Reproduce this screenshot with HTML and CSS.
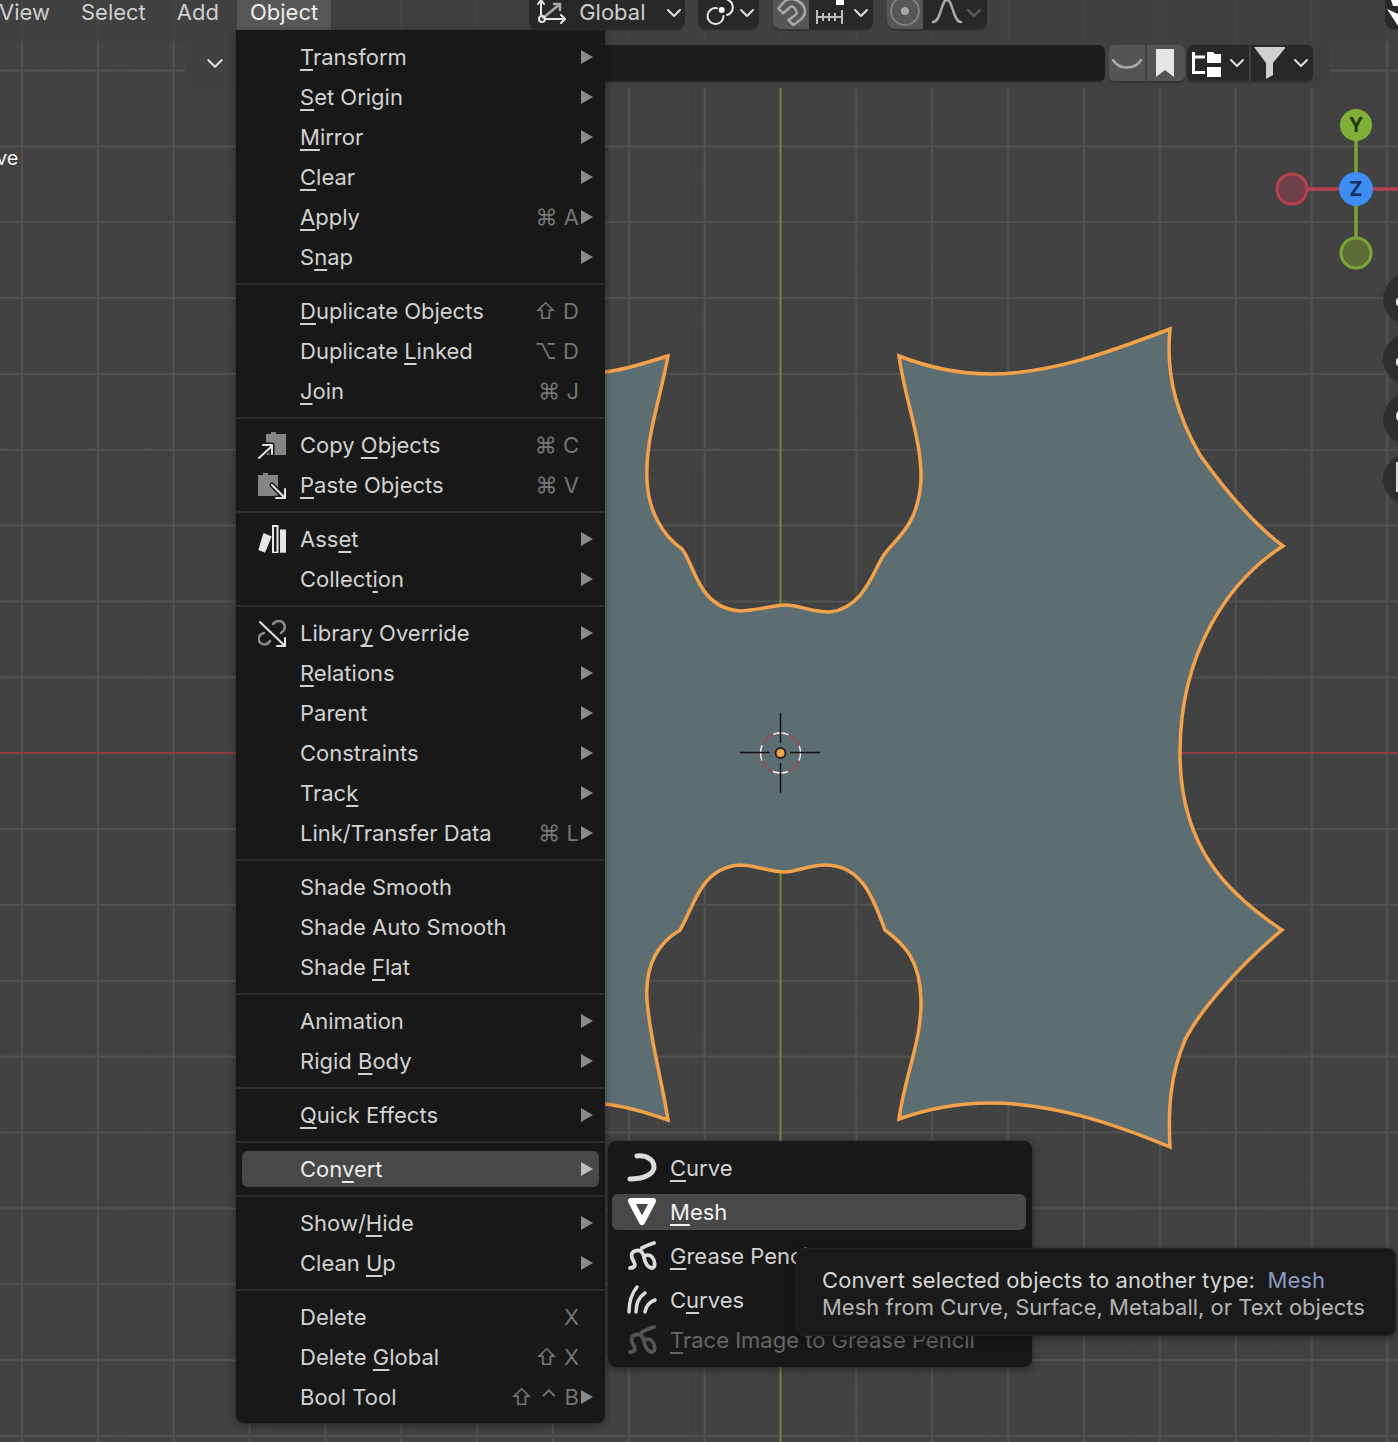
FILE: index.html
```html
<!DOCTYPE html>
<html lang="en">
<head>
<meta charset="utf-8">
<title>Object menu</title>
<link rel="stylesheet" href="styles.css">
</head>
<body>
<svg class="defs" width="0" height="0" aria-hidden="true">
  <defs>
    <symbol id="chev" viewBox="0 0 16 10"><path d="M2 2l6 6 6-6" fill="none" stroke="currentColor" stroke-width="2" stroke-linecap="round" stroke-linejoin="round"/></symbol>
    <symbol id="gp" viewBox="0 0 30 30"><path d="M3 27C7 27 9 25 7 21C4 16 3 12 8 10C13 8 16 11 17 16C18 22 21 27 25 27C29 27 28 19 25 16C22 13 18 14 17 16M15 7C19 5 23 3 27 2" fill="none" stroke="currentColor" stroke-width="3.8" stroke-linecap="round"/></symbol>
  </defs>
</svg>
<div class="stage">
  <svg class="canvas" viewBox="0 0 1398 1442" width="1398" height="1442" aria-hidden="true">
    <line x1="780.5" y1="0" x2="780.5" y2="1442" class="axis-y"/>
    <line x1="0" y1="753" x2="1398" y2="753" class="axis-x"/>
    <path class="mesh" d="M560 378L605 372C625 370 645 363 668 356C660 400 645 440 647 480C648 510 662 535 682 549C695 565 698 608 740 611C760 610 775 605 785 605C800 605 810 612 830 612C862 608 872 575 882 558C892 540 918 530 921 480C922 440 905 400 899 356C930 368 960 374 990 374C1050 374 1110 352 1170 329C1165 380 1180 420 1200 455C1225 490 1255 525 1283 546C1230 580 1180 650 1180 753C1180 850 1230 895 1282 930C1240 965 1200 1010 1185 1040C1170 1075 1168 1110 1170 1147C1110 1122 1050 1103 990 1103C960 1103 930 1108 899 1119C905 1075 922 1040 921 1000C920 960 905 945 885 930C875 905 865 865 825 865C810 865 795 872 785 872C770 872 755 865 740 865C700 868 695 905 680 930C655 945 645 970 647 1000C650 1040 662 1080 668 1120C645 1112 625 1106 605 1104L560 1100Z"/>
    <g class="cursor3d">
      <circle cx="780.5" cy="753" r="20" class="c-red"/>
      <circle cx="780.5" cy="753" r="20" class="c-white"/>
      <path d="M780.5 713v30M780.5 763v30M740 752.5h30M790 752.5h30"/>
    </g>
    <circle cx="780.5" cy="753" r="5" class="origin"/>
    <g class="gizmo">
      <line x1="1292" y1="189" x2="1398" y2="189" class="g-red"/>
      <line x1="1356" y1="125" x2="1356" y2="253" class="g-green"/>
      <circle cx="1292" cy="189" r="15" class="g-xn"/>
      <circle cx="1356" cy="253" r="15" class="g-yn"/>
      <circle cx="1356" cy="125" r="16" class="g-y"/>
      <circle cx="1356" cy="189" r="17" class="g-z"/>
      <text x="1356" y="132" class="g-ty">Y</text>
      <text x="1356" y="196" class="g-tz">Z</text>
    </g>
  </svg>

  <div class="tool-circles">
    <div class="tool-circle"><span class="tc-mark"></span></div>
    <div class="tool-circle"><span class="tc-mark"></span></div>
    <div class="tool-circle"><span class="tc-mark tc-round"></span></div>
    <div class="tool-circle"><span class="tc-mark tc-grid"></span></div>
  </div>

  <div class="side-label">ve</div>

  <header class="header">
    <div class="mitem mitem-first">View</div>
    <div class="mitem">Select</div>
    <div class="mitem">Add</div>
    <div class="mitem mitem-on">Object</div>

    <div class="hgroup hg-global">
      <svg class="hi-orient" viewBox="0 0 30 26" width="30" height="26"><path d="M6 18L23 4M23 4h-6M23 4v6" class="st-gray"/><path d="M4 15V1M1 4l3-4 3 4M8 19h20M24 15l4 4-4 4" class="st-white"/><circle cx="5" cy="19" r="3" class="st-white"/></svg>
      <span class="hg-label">Global</span>
      <svg class="chev" width="16" height="10"><use href="#chev"/></svg>
    </div>

    <div class="hgroup hg-pivot">
      <svg viewBox="0 0 30 26" width="30" height="26"><path d="M11 8.200A8 8 0 1 0 17.500 16" class="st-white"/><path d="M22 0A8 8 0 0 1 21 15" class="st-white"/><circle cx="15.700" cy="10" r="3" class="fl-white"/></svg>
      <svg class="chev" width="16" height="10"><use href="#chev"/></svg>
    </div>

    <div class="hgroup hg-snap">
      <div class="hbtn hbtn-on">
        <svg viewBox="0 0 30 26" width="30" height="26"><path d="M2.300 8.300L9 1C16 -4 29 2 29 12C29 16 26 19 17.300 25L12.300 20C18 16 21 15 20.700 12.700C20 8 16 5 14 7.300L7.300 13.300Z" class="st-gray"/></svg>
      </div>
      <svg class="hi-inc" viewBox="0 0 30 26" width="30" height="26"><path d="M1 10v14M26 10v14M1 17h25M7 13v8M13 13v8M19 13v8" class="st-thin"/><rect x="20" y="0" width="8" height="5" class="fl-white"/></svg>
      <svg class="chev" width="16" height="10"><use href="#chev"/></svg>
    </div>

    <div class="hgroup hg-prop">
      <div class="hbtn hbtn-on">
        <svg viewBox="0 0 36 26" width="36" height="26"><circle cx="18" cy="11" r="14" class="st-dim"/><circle cx="18" cy="11" r="4" class="fl-gray"/></svg>
      </div>
      <svg class="hi-bell" viewBox="0 0 32 26" width="32" height="26"><path d="M2 22C10 22 10 0 16 0C22 0 22 22 30 22" class="st-gray"/></svg>
      <svg class="chev chev-dim" width="16" height="10"><use href="#chev"/></svg>
    </div>

    <div class="corner-btn">
      <svg viewBox="0 0 13 28" width="13" height="28"><path d="M2 9L13 14V26Z" class="fl-white"/><path d="M6 0h7v6H8Z" class="fl-white"/></svg>
    </div>
  </header>

  <div class="toolbar">
    <svg class="chev chev-panel" width="18" height="11"><use href="#chev"/></svg>
    <div class="search"></div>
    <div class="tgroup tg-first">
      <div class="tbtn tbtn-on tbtn-smile"><svg viewBox="0 0 36 36" width="36" height="36"><path d="M4 15C10 25 26 25 32 15" class="st-gray"/></svg></div>
      <div class="tbtn tbtn-on tbtn-mark"><svg viewBox="0 0 38 36" width="38" height="36"><path d="M9 4H27V32L18 25L9 32Z" class="fl-light"/></svg></div>
    </div>
    <div class="tgroup tg-dark">
      <div class="tbtn tbtn-tree">
        <svg viewBox="0 0 32 36" width="32" height="36"><path d="M6.500 7V27.500H18M6.500 12H18" class="st-tree"/><path d="M20 10V7H26L28 9H34V18H20Z" class="fl-white"/><path d="M20 22H34V32H20Z" class="fl-white"/></svg>
        <svg class="chev" width="16" height="10"><use href="#chev"/></svg>
      </div>
      <div class="tbtn tbtn-filter">
        <svg viewBox="0 0 34 36" width="34" height="36"><path d="M3 2H35L22 18V30L15 34V18Z" class="fl-silver"/></svg>
        <svg class="chev" width="16" height="10"><use href="#chev"/></svg>
      </div>
    </div>
  </div>

  <nav class="menu">
    <div class="group">
      <div class="row"><span class="ic"></span><span class="lb"><u>T</u>ransform</span><span class="arr"></span></div>
      <div class="row"><span class="ic"></span><span class="lb"><u>S</u>et Origin</span><span class="arr"></span></div>
      <div class="row"><span class="ic"></span><span class="lb"><u>M</u>irror</span><span class="arr"></span></div>
      <div class="row"><span class="ic"></span><span class="lb"><u>C</u>lear</span><span class="arr"></span></div>
      <div class="row"><span class="ic"></span><span class="lb"><u>A</u>pply</span><span class="key">⌘ A</span><span class="arr"></span></div>
      <div class="row"><span class="ic"></span><span class="lb">S<u>n</u>ap</span><span class="arr"></span></div>
    </div>
    <div class="group">
      <div class="row"><span class="ic"></span><span class="lb"><u>D</u>uplicate Objects</span><span class="key">⇧ D</span><span class="noarr"></span></div>
      <div class="row"><span class="ic"></span><span class="lb">Duplicate <u>L</u>inked</span><span class="key">⌥ D</span><span class="noarr"></span></div>
      <div class="row"><span class="ic"></span><span class="lb"><u>J</u>oin</span><span class="key">⌘ J</span><span class="noarr"></span></div>
    </div>
    <div class="group">
      <div class="row"><span class="ic"><svg viewBox="0 0 28 28" width="28" height="28"><path d="M8 3H13V1H18V3H28V24H8Z" class="fl-mid"/><path d="M1 27L14 15M5 14H14V23" class="st-halo"/><path d="M1 27L14 15M5 14H14V23" class="st-icon"/></svg></span><span class="lb">Copy <u>O</u>bjects</span><span class="key">⌘ C</span><span class="noarr"></span></div>
      <div class="row"><span class="ic"><svg viewBox="0 0 28 28" width="28" height="28"><path d="M0 4H5V2H10V4H20V25H0Z" class="fl-mid"/><path d="M14 14L27 27M27 18V27H18" class="st-halo"/><path d="M14 14L27 27M27 18V27H18" class="st-icon"/></svg></span><span class="lb"><u>P</u>aste Objects</span><span class="key">⌘ V</span><span class="noarr"></span></div>
    </div>
    <div class="group">
      <div class="row"><span class="ic"><svg viewBox="0 0 28 28" width="28" height="28"><path d="M5.500 8L13.700 11.500L7 27.700L0.300 25Z" class="fl-light"/><rect x="15" y="1" width="4.500" height="26.700" class="st-thin2"/><rect x="22" y="4.500" width="6" height="23.200" class="fl-light"/></svg></span><span class="lb">Ass<u>e</u>t</span><span class="arr"></span></div>
      <div class="row"><span class="ic"></span><span class="lb">Collect<u>i</u>on</span><span class="arr"></span></div>
    </div>
    <div class="group">
      <div class="row"><span class="ic"><svg viewBox="0 0 28 28" width="28" height="28"><path d="M15 5C18 1 24 1 26 5C28 9 26 12 23 14M12 22C9 27 3 26 1 22C0 18 2 15 6 14" class="st-chain"/><path d="M2 3L27 27M27 19V27H19" class="st-icon"/></svg></span><span class="lb">Librar<u>y</u> Override</span><span class="arr"></span></div>
      <div class="row"><span class="ic"></span><span class="lb"><u>R</u>elations</span><span class="arr"></span></div>
      <div class="row"><span class="ic"></span><span class="lb">Parent</span><span class="arr"></span></div>
      <div class="row"><span class="ic"></span><span class="lb">Constraints</span><span class="arr"></span></div>
      <div class="row"><span class="ic"></span><span class="lb">Trac<u>k</u></span><span class="arr"></span></div>
      <div class="row"><span class="ic"></span><span class="lb">Link/Transfer Data</span><span class="key">⌘ L</span><span class="arr"></span></div>
    </div>
    <div class="group">
      <div class="row"><span class="ic"></span><span class="lb">Shade Smooth</span></div>
      <div class="row"><span class="ic"></span><span class="lb">Shade Auto Smooth</span></div>
      <div class="row"><span class="ic"></span><span class="lb">Shade <u>F</u>lat</span></div>
    </div>
    <div class="group">
      <div class="row"><span class="ic"></span><span class="lb">Animation</span><span class="arr"></span></div>
      <div class="row"><span class="ic"></span><span class="lb">Rigid <u>B</u>ody</span><span class="arr"></span></div>
    </div>
    <div class="group">
      <div class="row"><span class="ic"></span><span class="lb"><u>Q</u>uick Effects</span><span class="arr"></span></div>
    </div>
    <div class="group">
      <div class="row row-on"><span class="ic"></span><span class="lb">Con<u>v</u>ert</span><span class="arr"></span></div>
    </div>
    <div class="group">
      <div class="row"><span class="ic"></span><span class="lb">Show/<u>H</u>ide</span><span class="arr"></span></div>
      <div class="row"><span class="ic"></span><span class="lb">Clean <u>U</u>p</span><span class="arr"></span></div>
    </div>
    <div class="group">
      <div class="row"><span class="ic"></span><span class="lb">Delete</span><span class="key">X</span><span class="noarr"></span></div>
      <div class="row"><span class="ic"></span><span class="lb">Delete <u>G</u>lobal</span><span class="key">⇧ X</span><span class="noarr"></span></div>
      <div class="row"><span class="ic"></span><span class="lb">Bool Tool</span><span class="key key-wide">⇧ ⌃ B</span><span class="arr"></span></div>
    </div>
  </nav>

  <div class="submenu">
    <div class="srow"><svg class="sic" viewBox="0 0 30 30" width="30" height="30"><path d="M10 3C20 2 27 7 27 14C27 22 15 26 3 26" class="st-curve"/></svg><span class="lb"><u>C</u>urve</span></div>
    <div class="srow srow-on"><svg class="sic" viewBox="0 0 30 30" width="30" height="30"><path d="M4 4H26L15 25Z" class="st-mesh"/></svg><span class="lb"><u>M</u>esh</span></div>
    <div class="srow"><svg class="sic" width="30" height="30"><use href="#gp"/></svg><span class="lb"><u>G</u>rease Pencil</span></div>
    <div class="srow"><svg class="sic" viewBox="0 0 30 30" width="30" height="30"><path d="M2 27C2 18 5 8 10 2M9 27C9 19 12 12 18 8M18 27C19 22 22 17 28 15" class="st-hair"/></svg><span class="lb">C<u>u</u>rves</span></div>
    <div class="srow srow-off"><svg class="sic" width="30" height="30"><use href="#gp"/></svg><span class="lb"><u>T</u>race Image to Grease Pencil</span></div>
  </div>

  <div class="tooltip">
    <p class="tip-l1">Convert selected objects to another type:&nbsp; <span class="tip-val">Mesh</span></p>
    <p class="tip-l2">Mesh from Curve, Surface, Metaball, or Text objects</p>
  </div>
</div>
</body>
</html>
```
FILE: styles.css
```css
* { box-sizing: border-box; }
html, body { margin: 0; padding: 0; background: #404040; }
body { font-family: "Inter", "DejaVu Sans", sans-serif; font-size: 22px; color: #d2d2d2; }
.defs { position: absolute; }

.stage {
  position: relative;
  width: 1398px;
  height: 1442px;
  overflow: hidden;
  background-color: #414141;
  background-image:
    linear-gradient(to right, #515151 2px, transparent 2px),
    linear-gradient(to bottom, #515151 2px, transparent 2px),
    linear-gradient(to right, #444444 1px, transparent 1px),
    linear-gradient(to bottom, #444444 1px, transparent 1px);
  background-size: 75.87px 75.87px, 75.87px 75.87px, 7.587px 7.587px, 7.587px 7.587px;
  background-position: 21px 69.5px, 21px 69.5px, 21px 69.5px, 21px 69.5px;
}

/* viewport canvas */
.canvas { position: absolute; left: 0; top: 0; }
.axis-y { stroke: #6d8a2d; stroke-width: 2; }
.axis-x { stroke: #8f3a45; stroke-width: 2; }
.mesh { fill: #5d6e72; stroke: #f2a24a; stroke-width: 3.5; stroke-linejoin: miter; }
.cursor3d path { stroke: #111; stroke-width: 1.500; fill: none; }
.c-red { fill: none; stroke: #9a4a4e; stroke-width: 1.500; }
.c-white { fill: none; stroke: #eee; stroke-width: 1.500; stroke-dasharray: 15.7 15.7; stroke-dashoffset: 8; }
.origin { fill: #f2a545; stroke: #222; stroke-width: 2; }
.g-red { stroke: #b8404f; stroke-width: 3.500; }
.g-green { stroke: #7aa535; stroke-width: 3.500; }
.g-xn { fill: #6d3f48; stroke: #b8404f; stroke-width: 3; }
.g-yn { fill: #5c6c37; stroke: #7aa535; stroke-width: 3; }
.g-y { fill: #7fb038; }
.g-z { fill: #3f8cf2; }
.g-ty, .g-tz { font-family: "Inter", sans-serif; font-size: 20px; font-weight: 700; text-anchor: middle; }
.g-ty { fill: #26330f; }
.g-tz { fill: #12305f; }

.side-label { position: absolute; left: -4px; top: 145px; color: #ededed; font-size: 20px; line-height: 26px; }

.tool-circles { position: absolute; left: 1383px; top: 274px; display: flex; flex-direction: column; gap: 10px; }
.tool-circle { position: relative; width: 50px; height: 50px; border-radius: 50%; background: #2e2e2e; overflow: hidden; }
.tc-mark { position: absolute; left: 13px; top: 24px; width: 6px; height: 8px; background: #e8e8e8; border-radius: 3px 0 0 3px; }
.tc-round { top: 14px; height: 16px; width: 8px; border-radius: 8px 0 0 8px; }
.tc-grid { top: 8px; height: 30px; width: 6px; background: none; border: 2px solid #ddd; border-radius: 0; }

/* top header */
.header {
  position: relative;
  display: flex;
  align-items: flex-start;
  height: 41px;
  background-color: #404040;
  background-image: linear-gradient(to right, #444444 2px, transparent 2px);
  background-size: 75.87px 100%;
  background-position: 21px 0;
}
.mitem { height: 30px; padding: 0 13px 6px; margin-right: 5px; line-height: 24px; color: #cfcfcf; flex: none; }
.mitem-first { margin-left: -14px; }
.mitem-on { background: #575757; color: #ececec; margin-right: 0; }

.hgroup { display: flex; align-items: flex-start; height: 29px; background: #282828; border-radius: 0 0 8px 8px; box-shadow: 0 2px 0 #333; flex: none; color: #e0e0e0; overflow: hidden; }
.hgroup > .chev { margin-top: 8px; }
.hg-global { margin-left: 198px; width: 156px; padding-left: 8px; }
.hg-label { margin-left: 12px; color: #cfcfcf; line-height: 24px; }
.hg-global .chev { margin-left: auto; margin-right: 3px; }
.hg-pivot { margin-left: 13px; width: 61px; padding-left: 8px; }
.hg-pivot .chev { margin-left: 3px; }
.hg-snap { margin-left: 14px; width: 100px; }
.hg-prop { margin-left: 14px; width: 100px; }
.hbtn { width: 36px; height: 29px; display: flex; align-items: flex-start; justify-content: center; flex: none; }
.hbtn-on { background: #565656; }
.hi-inc { margin-left: 7px; }
.hi-bell { margin-left: 8px; }
.hg-snap .chev { margin-left: 7px; }
.hg-prop .chev { margin-left: 3px; }
.chev-dim { color: #5e5e5e; }
.corner-btn { margin-left: auto; width: 13px; height: 29px; background: #282828; border-radius: 0 0 0 8px; flex: none; }

/* second row */
.toolbar {
  position: relative;
  display: flex;
  align-items: center;
  margin-left: 185px;
  width: 1145px;
  height: 47px;
  padding: 0 0 3px;
  background: #404040;
  border-radius: 0 0 8px 8px;
}
.toolbar::before, .toolbar::after { content: ""; position: absolute; top: 0; width: 10px; height: 10px; }
.toolbar::before { left: -10px; background: radial-gradient(circle at 0 100%, transparent 10px, #404040 10.5px); }
.toolbar::after { right: -10px; background: radial-gradient(circle at 100% 100%, transparent 10px, #404040 10.5px); }
.chev-panel { margin-left: 21px; color: #e0e0e0; flex: none; }
.search { width: 700px; height: 36px; background: #1d1d1d; border-radius: 0 6px 6px 0; box-shadow: 0 2px 0 #333; flex: none; margin-left: 181px; }
.tgroup { display: flex; height: 36px; border-radius: 6px; box-shadow: 0 2px 0 #333; overflow: hidden; flex: none; }
.tg-first { margin-left: 4px; gap: 2px; }
.tg-dark { margin-left: 2px; gap: 2px; }
.tbtn { display: flex; align-items: center; height: 36px; color: #e0e0e0; flex: none; }
.tbtn-on { background: #545454; }
.tbtn-smile { width: 36px; }
.tbtn-mark { width: 38px; }
.tbtn-tree { width: 62px; background: #282828; padding-left: 0; }
.tbtn-tree svg:first-child { overflow: visible; }
.tbtn-tree .chev { margin-left: 10px; margin-right: 0; }
.tbtn-filter { width: 62px; background: #282828; }
.tbtn-filter .chev { margin-left: 8px; }

/* object menu */
.menu {
  position: absolute;
  left: 236px;
  top: 30px;
  width: 369px;
  padding: 7px 0 6px;
  background: #181818;
  border-radius: 0 0 8px 8px;
  box-shadow: 0 2px 8px rgba(0, 0, 0, 0.45);
}
.group { display: flex; flex-direction: column; gap: 4px; padding: 2px 0; }
.group + .group { margin-top: 6px; padding-top: 8px; border-top: 2px solid #2c2c2c; }
.row { display: flex; align-items: center; height: 36px; margin: 0 6px; padding: 0 6px 0 16px; border-radius: 6px; line-height: 24px; }
.row-on { background: #484848; color: #ececec; }
.ic { display: block; width: 28px; height: 28px; margin-right: 14px; flex: none; }
.ic svg { display: block; }
.lb { flex: 1; white-space: nowrap; }
u { text-decoration: underline; text-decoration-thickness: 2px; text-underline-offset: 4px; text-decoration-skip-ink: none; }
.key { color: #757575; margin-right: 2px; white-space: nowrap; font-size: 22px; }
.key-wide { word-spacing: 1px; }
.arr { width: 0; height: 0; margin-right: 0; border-left: 12px solid #8a8a8a; border-top: 7px solid transparent; border-bottom: 7px solid transparent; flex: none; }
.row-on .arr { border-left-color: #bdbdbd; }
.noarr { width: 12px; flex: none; }

/* submenu */
.submenu {
  position: absolute;
  left: 608px;
  top: 1141px;
  width: 424px;
  height: 226px;
  padding: 9px 6px 9px 4px;
  display: flex;
  flex-direction: column;
  gap: 8px;
  background: #181818;
  border-radius: 8px;
  box-shadow: 0 2px 8px rgba(0, 0, 0, 0.45);
}
.srow { display: flex; align-items: center; height: 36px; padding-left: 15px; border-radius: 6px; color: #d2d2d2; flex: none; overflow: visible; }
.srow-on { background: #484848; color: #f0f0f0; }
.srow-off { margin-top: -4px; color: #666; }
.sic { margin-right: 13px; flex: none; color: #dcdcdc; overflow: visible; }
.srow-off .sic { color: #555; }

/* tooltip */
.tooltip {
  position: absolute;
  left: 796px;
  top: 1248px;
  width: 600px;
  height: 88px;
  padding: 18px 0 0 25px;
  background: #1a1a1a;
  border: 1px solid #222;
  border-radius: 8px;
  box-shadow: 0 2px 8px rgba(0, 0, 0, 0.4);
}
.tooltip p { margin: 0; line-height: 27px; white-space: nowrap; }
.tip-l1 { color: #d4d4d4; letter-spacing: 0.06px; }
.tip-l2 { color: #b4b4b4; }
.tip-val { color: #8a9cc4; }

/* icon paints */
.st-white { fill: none; stroke: #e6e6e6; stroke-width: 2; stroke-linecap: round; stroke-linejoin: round; }
.st-gray { fill: none; stroke: #a8a8a8; stroke-width: 2.500; stroke-linecap: round; stroke-linejoin: round; }
.st-dim { fill: none; stroke: #808080; stroke-width: 2; }
.st-thin { fill: none; stroke: #bdbdbd; stroke-width: 2; }
.st-thin2 { fill: none; stroke: #e6e6e6; stroke-width: 2; }
.st-tree { fill: none; stroke: #fff; stroke-width: 3; }
.st-icon { fill: none; stroke: #e4e4e4; stroke-width: 2; stroke-linecap: round; stroke-linejoin: round; }
.st-halo { fill: none; stroke: #181818; stroke-width: 5; stroke-linecap: round; stroke-linejoin: round; }
.st-chain { fill: none; stroke: #8a8a8a; stroke-width: 2.500; stroke-linecap: round; }
.st-curve { fill: none; stroke: #dcdcdc; stroke-width: 5; stroke-linecap: round; }
.st-mesh { fill: none; stroke: #fff; stroke-width: 6; stroke-linejoin: round; }
.st-hair { fill: none; stroke: #dcdcdc; stroke-width: 3.500; stroke-linecap: round; }
.fl-white { fill: #fff; stroke: none; }
.fl-light { fill: #e6e6e6; stroke: none; }
.fl-silver { fill: #cfcfcf; stroke: none; }
.fl-gray { fill: #a8a8a8; stroke: none; }
.fl-mid { fill: #858585; stroke: none; }
```
